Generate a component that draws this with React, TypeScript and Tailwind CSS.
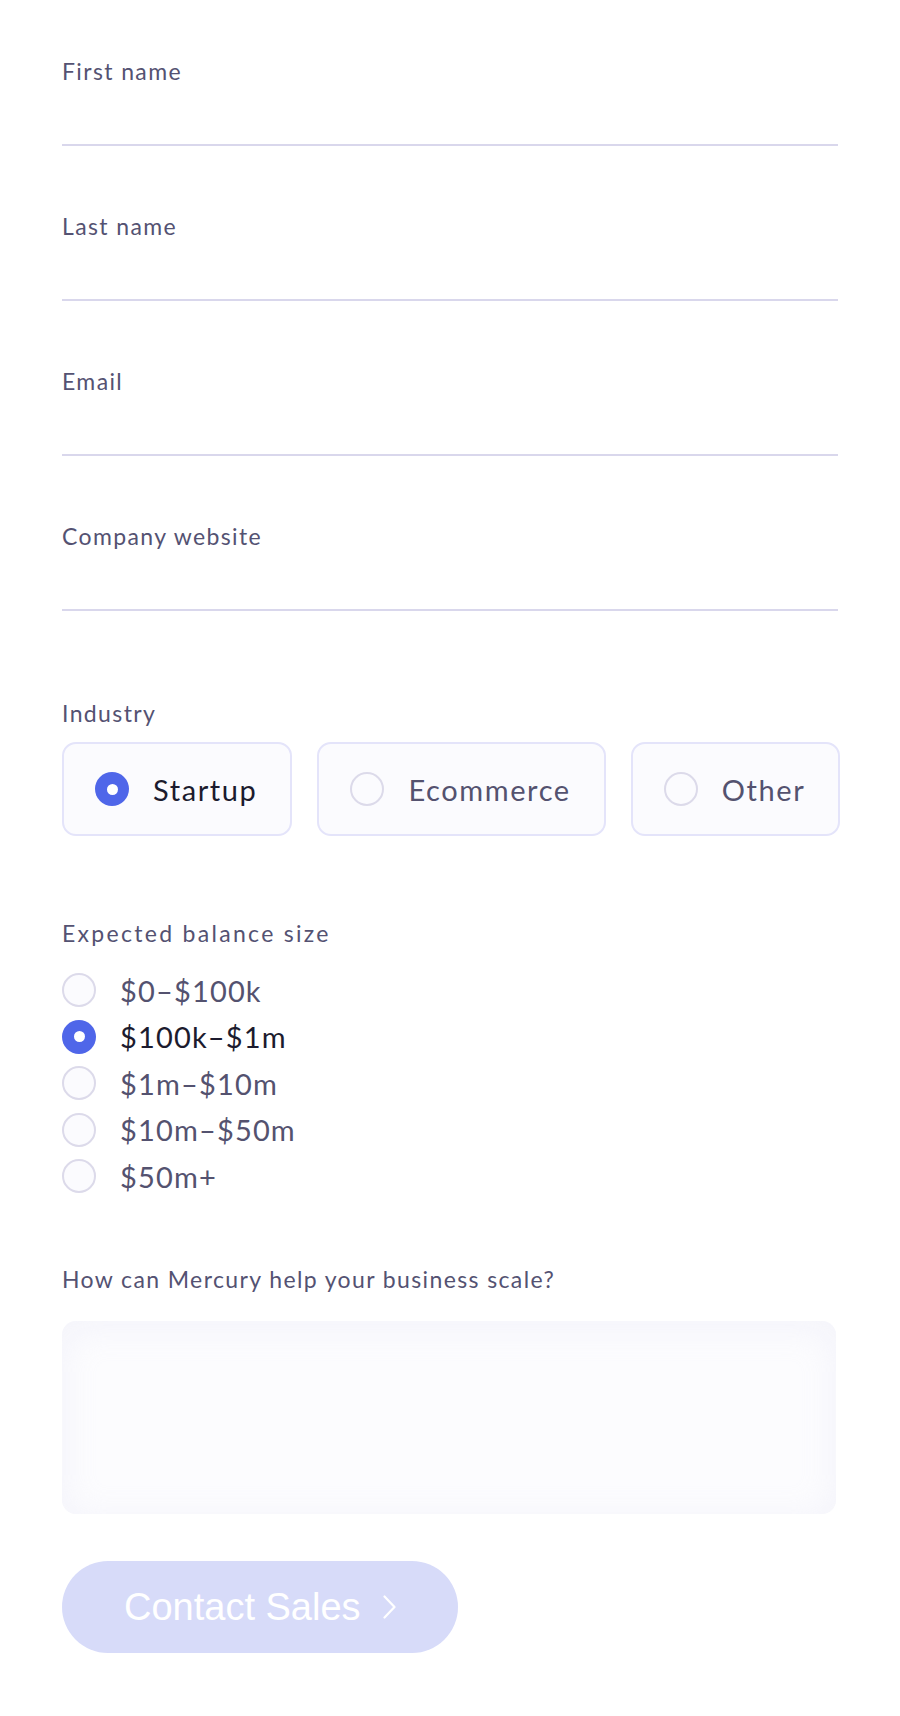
import React from "react";

const font = { fontFamily: "Lato, 'Noto Sans', sans-serif" };

function Field({ label }: { label: string }) {
  return (
    <div className="flex flex-col">
      <label className="block text-[23px] leading-[28px] tracking-[0.06em] text-[#545272]">{label}</label>
      <input
        type="text"
        className="h-[61px] w-full border-b-2 border-[#d9d7ec] bg-transparent outline-none"
      />
    </div>
  );
}

function Radio({ checked }: { checked: boolean }) {
  if (checked) {
    return (
      <span className="flex h-[34px] w-[34px] shrink-0 items-center justify-center rounded-full bg-[#4f66e9]">
        <span className="h-[11px] w-[11px] rounded-full bg-white" />
      </span>
    );
  }
  return <span className="block h-[34px] w-[34px] shrink-0 rounded-full border-2 border-[#dcdaea] bg-[#fbfbfe]" />;
}

export default function App() {
  const industries = [
    { name: "Startup", checked: true },
    { name: "Ecommerce", checked: false },
    { name: "Other", checked: false },
  ];
  const balances = [
    { name: "$0–$100k", checked: false },
    { name: "$100k–$1m", checked: true },
    { name: "$1m–$10m", checked: false },
    { name: "$10m–$50m", checked: false },
    { name: "$50m+", checked: false },
  ];
  return (
    <div className="min-h-[1716px] bg-white px-[62px] pt-[57px]" style={font}>
      <div className="w-[776px]">
        <div className="flex flex-col gap-[66px]">
          <Field label="First name" />
          <Field label="Last name" />
          <Field label="Email" />
          <Field label="Company website" />
        </div>

        <div className="mt-[88px] text-[23px] leading-[28px] tracking-[0.06em] text-[#545272]">Industry</div>
        <div className="mt-[15px] flex gap-[25px]">
          {industries.map((o) => (
            <div
              key={o.name}
              className="flex h-[94px] items-center gap-[24px] rounded-[14px] border-2 border-[#e4e4fa] bg-[#fbfbfe] pl-[31px] pr-[33px]"
            >
              <Radio checked={o.checked} />
              <span
                className={
                  "text-[29px] leading-none tracking-[0.055em] " +
                  (o.checked ? "text-[#1c1b2e]" : "text-[#54526f]")
                }
              >
                {o.name}
              </span>
            </div>
          ))}
        </div>

        <div className="mt-[83px] text-[23px] leading-[28px] tracking-[0.1em] text-[#545272]">Expected balance size</div>
        <div className="mt-[26px] flex flex-col gap-[12.5px]">
          {balances.map((o) => (
            <div key={o.name} className="flex h-[34px] items-center gap-[24px]">
              <Radio checked={o.checked} />
              <span
                className={
                  "text-[29px] leading-none tracking-[0.04em] " +
                  (o.checked ? "text-[#1c1b2e]" : "text-[#54526f]")
                }
              >
                {o.name}
              </span>
            </div>
          ))}
        </div>

        <div className="mt-[72px] text-[23px] leading-[28px] tracking-[0.06em] text-[#545272]">
          How can Mercury help your business scale?
        </div>
        <textarea className="mt-[28px] block h-[193px] w-[774px] resize-none rounded-[14px] bg-[#fcfcfe] shadow-[inset_0_6px_36px_rgba(232,232,246,0.45)] outline-none" />

        <button
          className="mt-[47px] flex h-[92px] items-center gap-[22px] rounded-full bg-[#d7dbf9] pl-[62px] pr-[62px] text-[38px] text-white"
          style={{ fontFamily: "'Liberation Sans', Arial, sans-serif" }}
        >
          <span>Contact Sales</span>
          <svg width="13" height="24" viewBox="0 0 13 24" fill="none">
            <path d="M1.5 1.5 L11.5 12 L1.5 22.5" stroke="white" strokeWidth="2.2" strokeLinecap="round" strokeLinejoin="round" />
          </svg>
        </button>
      </div>
    </div>
  );
}
